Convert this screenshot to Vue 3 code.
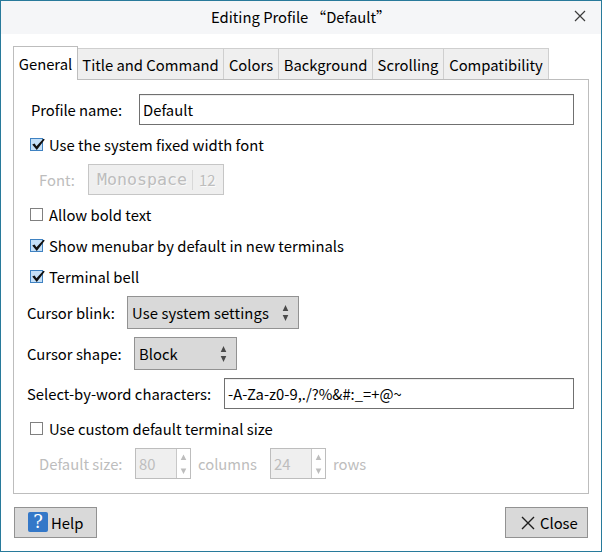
<script setup>
import { ref } from 'vue'

const tabs = [
  { label: 'Title and Command', width: 146 },
  { label: 'Colors', width: 55 },
  { label: 'Background', width: 94 },
  { label: 'Scrolling', width: 71 },
  { label: 'Compatibility', width: 105 }
]
const profileName = ref('Default')
const wordChars = ref('-A-Za-z0-9,./?%&#:_=+@~')
const toggles = [
  { label: 'Allow bold text', on: false },
  { label: 'Show menubar by default in new terminals', on: true },
  { label: 'Terminal bell', on: true }
]
</script>

<template>
  <div class="window">
    <header class="titlebar">
      <div class="title"><span>Editing Profile</span><span>“Default”</span></div>
      <svg class="close-x" width="12" height="12" viewBox="0 0 12 12"><path d="M1 1L11 11M11 1L1 11" /></svg>
    </header>

    <nav class="tabs">
      <div class="tab active">General</div>
      <div v-for="t in tabs" :key="t.label" class="tab" :style="{ width: t.width + 'px' }">{{ t.label }}</div>
    </nav>

    <main class="panel">
      <div class="row field first">
        <label class="l-name">Profile name:</label>
        <input v-model="profileName" class="entry" />
      </div>
      <div class="row check spaced">
        <span class="box on"><svg width="16" height="14" viewBox="0 0 16 14"><path d="M2.2 6.4L4.6 5.6L6.4 8.2L13.4 .7L14.8 1.6L6.8 12Z" /></svg></span>
        <span>Use the system fixed width font</span>
      </div>
      <div class="row field indent">
        <label class="l-font">Font:</label>
        <div class="font-button"><span class="mono">Monospace</span><i></i><span>12</span></div>
      </div>
      <div class="checks">
        <div v-for="c in toggles" :key="c.label" class="row check">
          <span class="box" :class="{ on: c.on }"><svg v-if="c.on" width="16" height="14" viewBox="0 0 16 14"><path d="M2.2 6.4L4.6 5.6L6.4 8.2L13.4 .7L14.8 1.6L6.8 12Z" /></svg></span>
          <span>{{ c.label }}</span>
        </div>
      </div>
      <div class="row combo-row">
        <label class="l-blink">Cursor blink:</label>
        <div class="combo wide"><span>Use system settings</span>
          <svg width="7" height="18" viewBox="0 0 7 18"><path d="M3.5 1L6.3 7H.7ZM.7 11H6.3L3.5 17Z" /></svg>
        </div>
      </div>
      <div class="row combo-row">
        <label class="l-shape">Cursor shape:</label>
        <div class="combo"><span>Block</span>
          <svg width="7" height="18" viewBox="0 0 7 18"><path d="M3.5 1L6.3 7H.7ZM.7 11H6.3L3.5 17Z" /></svg>
        </div>
      </div>
      <div class="row field words">
        <label class="l-words">Select-by-word characters:</label>
        <input v-model="wordChars" class="entry" />
      </div>
      <div class="row check spaced">
        <span class="box"></span><span>Use custom default terminal size</span>
      </div>
      <div class="row field indent">
        <label class="l-size">Default size:</label>
        <div class="spin"><span>80</span><b><svg width="7" height="22" viewBox="0 0 7 22"><path d="M3.5 1.5L6.3 7H.7ZM.7 15.5H6.3L3.5 21Z" /></svg></b></div>
        <span class="unit">columns</span>
        <div class="spin"><span>24</span><b><svg width="7" height="22" viewBox="0 0 7 22"><path d="M3.5 1.5L6.3 7H.7ZM.7 15.5H6.3L3.5 21Z" /></svg></b></div>
        <span class="unit">rows</span>
      </div>
    </main>

    <footer class="actions">
      <button class="btn help"><span class="qmark">?</span>Help</button>
      <button class="btn shut"><svg width="14" height="14" viewBox="0 0 14 14"><path d="M1 1L13 13M13 1L1 13" /></svg>Close</button>
    </footer>
  </div>
</template>

<style>
body { margin: 0; background: #fff; overflow: hidden; }
</style>

<style scoped>
* { box-sizing: border-box; }
.window {
  width: 602px; height: 552px; border: 1px solid #287a9b; background: #fff;
  font: 14.8px/24px "Noto Sans CJK SC", "Noto Sans", sans-serif; color: #000;
  display: flex; flex-direction: column; white-space: nowrap;
}
.titlebar {
  height: 33px; flex: none; background: #f5f6f8; display: flex; align-items: center;
  justify-content: space-between; padding: 0 15px 1px 210px;
}
.title { display: flex; gap: 3px; }
.close-x { fill: none; stroke: #3c3c3c; stroke-width: 1.2; margin-top: -2px; }
.tabs { display: flex; align-items: flex-end; height: 34px; margin: 12px 0 0 12px; flex: none; position: relative; }
.tab {
  height: 32px; border: 1px solid #cfcfcf; border-left: 0; border-bottom-color: #bdbdbd; background: #efefef;
  padding: 4px 0 0; text-align: center; flex: none;
}
.tab.active { width: 65px; height: 34px; border: 1px solid #bdbdbd; border-bottom: 0; background: #fff; padding-top: 5px; }
.panel { width: 576px; height: 414px; margin-left: 12px; border: 1px solid #bdbdbd; border-top: 0; flex: none; padding-top: 14px; position: relative; }
.panel::before { content: ""; position: absolute; top: -1px; left: 64px; right: -1px; height: 1px; background: #bdbdbd; }
.row { display: flex; align-items: center; }
.field { height: 31px; }
.first { padding: 0 14px 0 17px; }
label { flex: none; }
.l-name { width: 108px; letter-spacing: -.07px; }
.entry {
  flex: 1; min-width: 0; height: 31px; border: 1px solid #707070; background: #fff; outline: 0;
  border-radius: 0; padding: 0 0 0 3px; margin: 0; font: inherit; color: inherit;
  box-shadow: inset 0 1px #ededed;
}
.check { height: 31px; padding-left: 16px; gap: 6px; }
.spaced { margin: 4px 0; }
.box { width: 13px; height: 13px; border: 1px solid #808080; background: #fff; display: block; flex: none; }
.box.on { border-color: #3f82c2; background: #c5e0f8; }
.box svg { display: block; margin: -1px; fill: #111; }
.indent { padding-left: 25px; color: #bdbdbd; }
.l-font { width: 49px; }
.font-button {
  width: 136px; height: 31px; border: 1px solid #c6c6c6; background: #efefef; display: flex; align-items: center;
  padding-left: 8px; text-shadow: 1px 1px #fafafa;
}
.font-button i { width: 1px; height: 20px; background: #d8d8d8; margin: 0 6px 0 5px; }
.mono { font-family: "DejaVu Sans Mono", monospace; font-size: 16.6px; width: 90px; }
.checks { margin: 4px 0 4px; }
.combo-row { height: 33px; padding-left: 13px; margin-bottom: 8px; }
.l-blink { width: 100px; }
.l-shape { width: 107px; }
.combo {
  width: 103px; height: 33px; border: 1px solid #929292; background: #d9d9d9; padding: 0 9px 0 4px;
  display: flex; align-items: center; justify-content: space-between;
}
.combo.wide { width: 172px; letter-spacing: .1px; }
.combo svg { fill: #4a4a4a; }
.words { padding: 0 14px 0 13px; }
.l-words { width: 197px; }
.l-size { width: 96px; }
.spin { width: 56px; height: 31px; border: 1px solid #bdbdbd; background: #efefef; display: flex; }
.spin span { width: 41px; padding: 3px 0 0 3px; border-right: 1px solid #c8c8c8; }
.spin b { flex: 1; background: #fff; display: flex; align-items: center; justify-content: center; }
.spin svg { fill: #bdbdbd; }
.unit { width: 72px; flex: none; margin-left: 7px; }
.actions { display: flex; justify-content: space-between; padding: 13px 13px 0 13px; }
.btn {
  width: 83px; height: 31px; border: 1px solid #929292; border-radius: 0; background: #d9d9d9; padding: 0;
  font: inherit; color: #000; display: flex; align-items: center;
}
.help { padding-left: 13px; gap: 3px; }
.qmark {
  width: 20px; height: 20px; border-radius: 2px; background: #3478c8; color: #fff; text-align: center;
  font: 18px/20px "DejaVu Serif", serif; margin-top: -2px;
}
.shut { padding-left: 15px; gap: 5px; }
.shut svg { fill: none; stroke: #1c1c1c; stroke-width: 1.4; }
</style>
